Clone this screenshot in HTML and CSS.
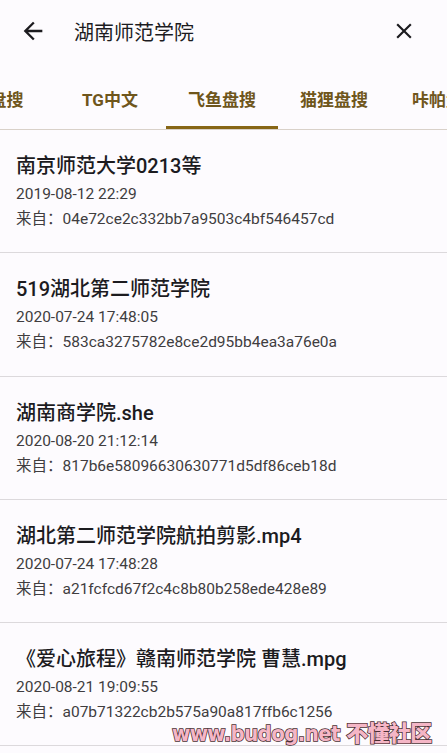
FILE: index.html
```html
<!DOCTYPE html>
<html>
<head>
    <meta charset="UTF-8">
    <title>搜索结果</title>
    <link rel="stylesheet" href="styles.css">
</head>
<body>

    <div class="app">

        <header class="top-bar">
            <button class="icon-btn back-btn" aria-label="返回">
                <svg viewBox="0 0 24 24" width="28" height="28"><path d="M20 11H7.83l5.59-5.59L12 4l-8 8 8 8 1.41-1.41L7.83 13H20v-2z"/></svg>
            </button>
            <div class="query">湖南师范学院</div>
            <button class="icon-btn clear-btn" aria-label="清除">
                <svg viewBox="0 0 24 24" width="26" height="26"><path d="M19 6.41 17.59 5 12 10.59 6.41 5 5 6.41 10.59 12 5 17.59 6.41 19 12 13.41 17.59 19 19 17.59 13.41 12z"/></svg>
            </button>
        </header>

        <nav class="tabs">
            <div class="tab-row">
                <div class="tab">云盘搜</div>
                <div class="tab">TG中文</div>
                <div class="tab active">飞鱼盘搜</div>
                <div class="tab">猫狸盘搜</div>
                <div class="tab">咔帕盘搜</div>
            </div>
        </nav>

        <ul class="results">
            <li class="result">
                <div class="title">南京师范大学0213等</div>
                <div class="meta">2019-08-12 22:29</div>
                <div class="meta">来自：04e72ce2c332bb7a9503c4bf546457cd</div>
            </li>
            <li class="result">
                <div class="title">519湖北第二师范学院</div>
                <div class="meta">2020-07-24 17:48:05</div>
                <div class="meta">来自：583ca3275782e8ce2d95bb4ea3a76e0a</div>
            </li>
            <li class="result">
                <div class="title">湖南商学院.she</div>
                <div class="meta">2020-08-20 21:12:14</div>
                <div class="meta">来自：817b6e58096630630771d5df86ceb18d</div>
            </li>
            <li class="result">
                <div class="title">湖北第二师范学院航拍剪影.mp4</div>
                <div class="meta">2020-07-24 17:48:28</div>
                <div class="meta">来自：a21fcfcd67f2c4c8b80b258ede428e89</div>
            </li>
            <li class="result">
                <div class="title">《爱心旅程》赣南师范学院 曹慧.mpg</div>
                <div class="meta">2020-08-21 19:09:55</div>
                <div class="meta">来自：a07b71322cb2b575a90a817ffb6c1256</div>
            </li>
        </ul>

        <div class="watermark">www.budog.net 不懂社区</div>

    </div>

</body>
</html>
```

FILE: styles.css
```css
body {
    margin: 0;
    background-color: #fdfbfe;
    font-family: Roboto, "Noto Sans CJK SC", sans-serif;
    color: #1c1b1f;
}

.app {
    position: relative;
    height: 753px;
    overflow: hidden;
}

/* search header */

.top-bar {
    display: flex;
    align-items: center;
    height: 62px;
}

.icon-btn {
    display: flex;
    align-items: center;
    justify-content: center;
    width: 48px;
    height: 48px;
    padding: 0;
    border: none;
    background: none;
    fill: #1c1b1f;
}

.back-btn {
    margin-left: 9px;
}

.query {
    flex: 1;
    margin-left: 17px;
    font-size: 20px;
    color: #1c1b1f;
}

.clear-btn {
    margin-right: 19px;
}

/* tabs */

.tabs {
    overflow: hidden;
    border-bottom: 1px solid #d9d1c9;
}

.tab-row {
    display: flex;
    margin-left: -58px;
}

.tab {
    flex: 0 0 112px;
    height: 67px;
    box-sizing: border-box;
    padding-top: 26px;
    line-height: 24px;
    text-align: center;
    font-size: 17px;
    font-weight: bold;
    color: #6f561c;
    white-space: nowrap;
}

.tab.active {
    border-bottom: 3px solid #876616;
}

/* result list */

.results {
    list-style: none;
    margin: 0;
    padding: 0;
}

.result {
    padding: 22px 16px 22.25px 16px;
    border-bottom: 1px solid #dcd9dc;
}

.title {
    font-size: 20px;
    font-weight: 500;
    line-height: 28px;
    margin-bottom: 3px;
    color: #1c1b1f;
}

.meta {
    font-size: 15.5px;
    line-height: 22px;
    color: #403d3f;
}

.meta + .meta {
    margin-top: 3px;
}

/* site stamp over the bottom corner */

.watermark {
    position: absolute;
    left: 172px;
    top: 715px;
    font-family: "DejaVu Sans", "Noto Sans CJK SC", sans-serif;
    font-stretch: condensed;
    font-size: 22px;
    font-weight: 900;
    letter-spacing: -0.6px;
    color: #f5b6c6;
    -webkit-text-stroke: 1.5px #4a3034;
    paint-order: stroke fill;
    white-space: nowrap;
}
```
